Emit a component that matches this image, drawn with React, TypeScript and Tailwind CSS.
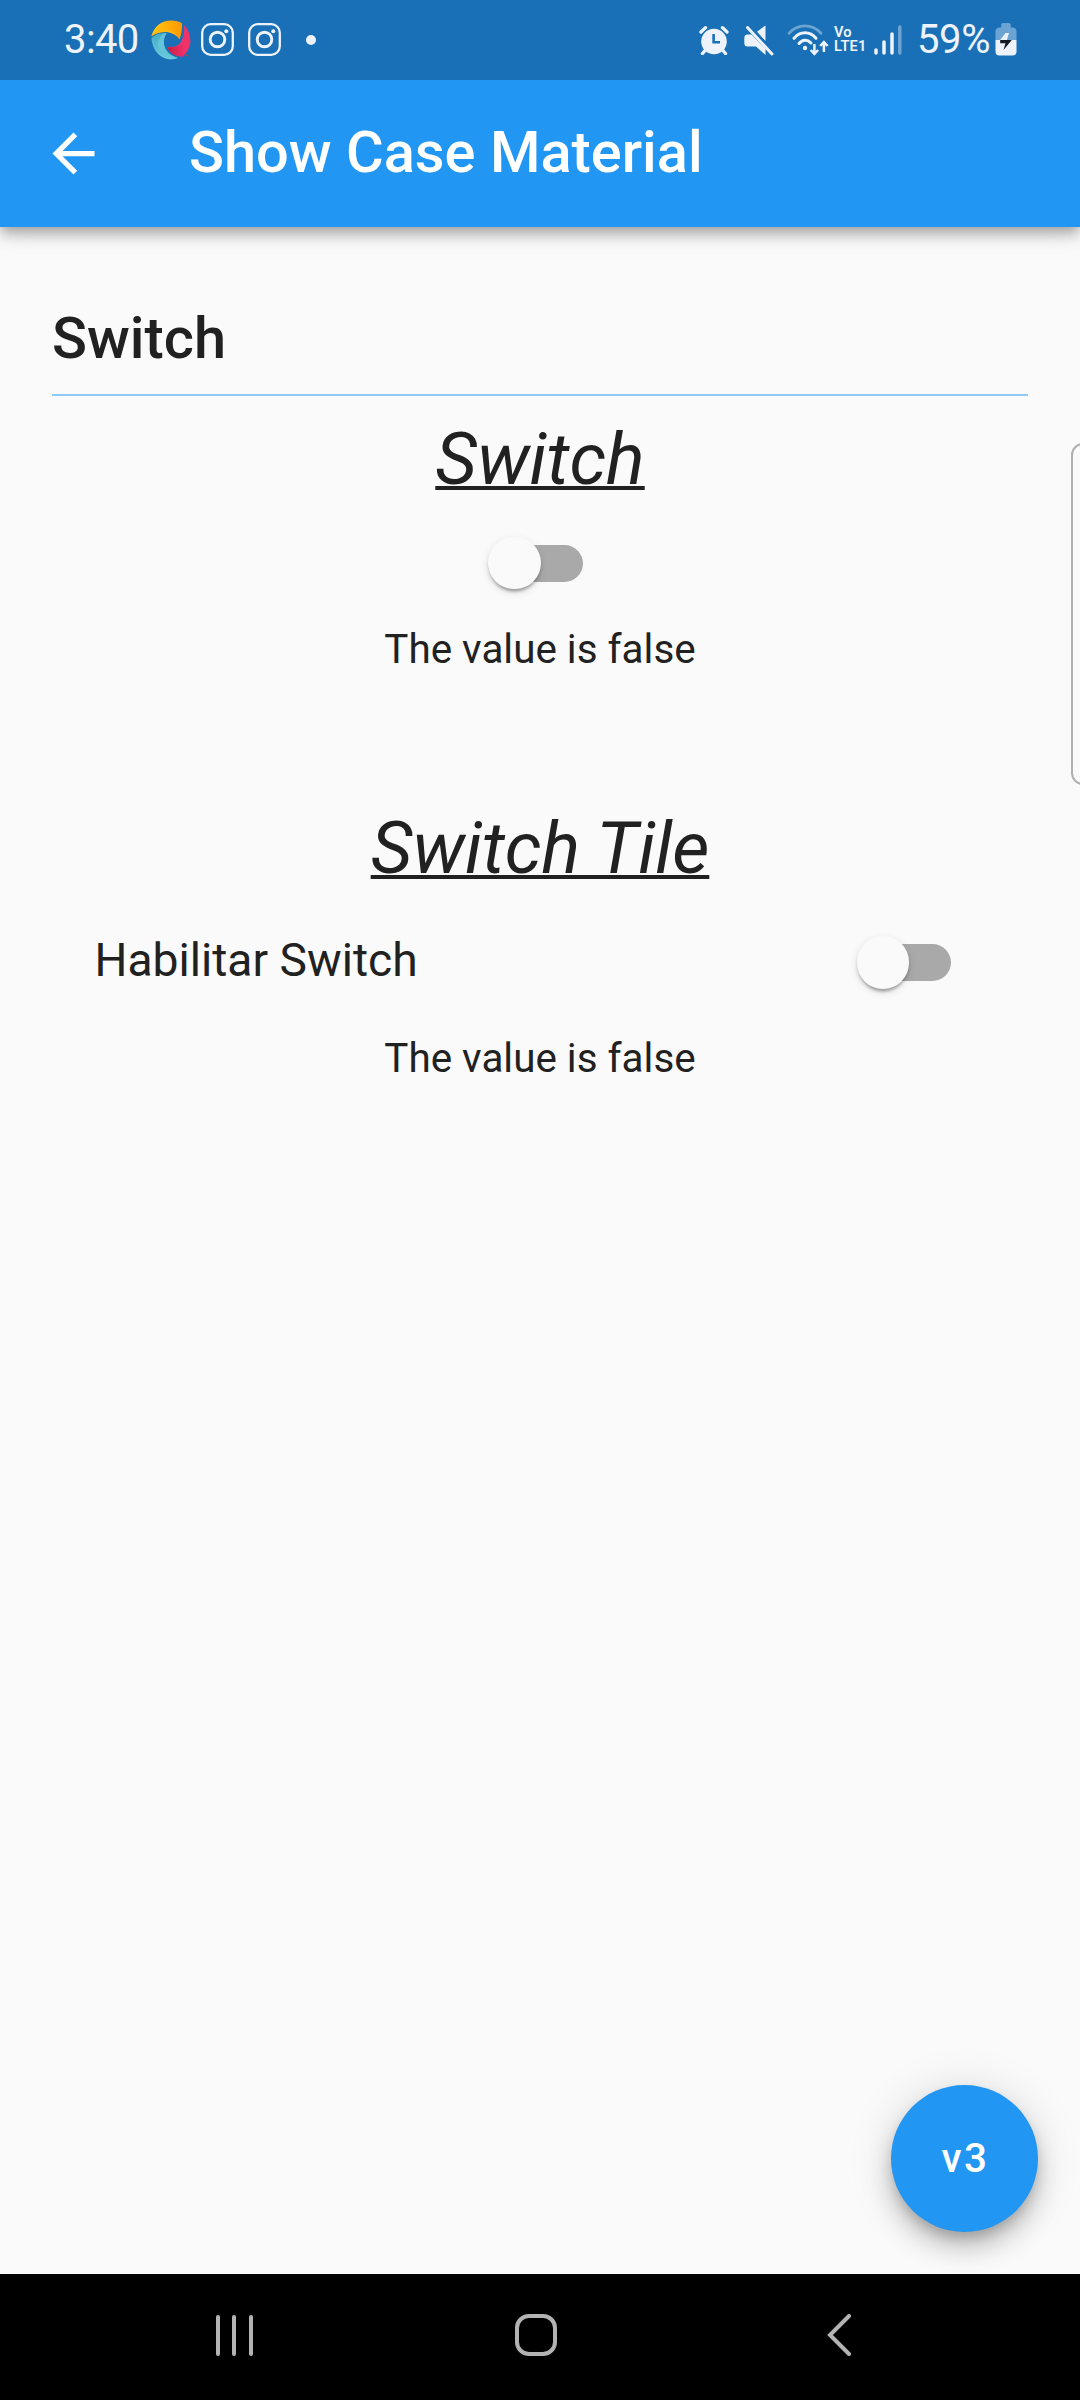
import React from "react";

const FG = "#eef3fb";

function PinwheelIcon() {
  return (
    <svg className="ml-[14px] h-[40px] w-[40px]" viewBox="0 0 40 40">
      <defs>
        <linearGradient id="amber" x1="0" x2="1">
          <stop offset="0" stopColor="#ffc814" />
          <stop offset="1" stopColor="#ff9800" />
        </linearGradient>
        <linearGradient id="rose" x1="0" x2="1">
          <stop offset="0" stopColor="#c81e40" />
          <stop offset="1" stopColor="#f0306a" />
        </linearGradient>
        <linearGradient id="aqua" x1="0" y1="0" x2="0" y2="1">
          <stop offset="0" stopColor="#45abc0" />
          <stop offset="1" stopColor="#6ccbe0" />
        </linearGradient>
      </defs>
      <path d="M0.4 16.200C3 6 11 0.400 20 0.400C24 0.400 28 1.400 31 3.200Q31.500 11 28.500 19.500C26 15 21 12.500 16 12C10 11.500 4 13.500 0.400 16.200Z" fill="url(#amber)" />
      <path d="M0.4 16.200C7 7 20 5 28.500 19.500C26 15 21 12.500 16 12C10 11.500 4 13.500 0.400 16.200Z" fill="#ffb812" />
      <path d="M33 5C38 10 40.500 18 39 25C37.500 30 35 34 31.500 36.500C25 37 18.500 33 16.300 27C22 27.500 27 26.500 30 22C33 17 33.500 11 33 5Z" fill="#f0326b" />
      <path d="M16.300 27C22 27.500 27 26.500 33 24C33 29 33 33 31.500 36.500C25 37 18.500 33 16.300 27Z" fill="url(#rose)" />
      <path d="M33.500 35.500L36.500 34.300L37.500 36.400Z" fill="#dc2950" />
      <path d="M0.4 18C4 14.500 9 13 15.800 12.800C12 18 12 25 15 30C18 34.500 22 36.500 27 38C14 43 1.500 34 0.400 18Z" fill="url(#aqua)" />
      <path d="M6.500 24C8 17 11 14 15.800 12.800C12 18 12 25 15 30C18 34.500 22 36.500 27 38C16 38 8 32 6.500 24Z" fill="#62c4d8" />
    </svg>
  );
}

function CameraIcon({ className }: { className: string }) {
  return (
    <svg className={className} viewBox="0 0 33 33" fill="none" stroke={FG}>
      <rect x="1.2" y="1.200" width="30.600" height="30.600" rx="8.500" strokeWidth="2.300" />
      <circle cx="16.500" cy="16.500" r="7.300" strokeWidth="2.900" />
      <circle cx="25.300" cy="8.200" r="2" fill={FG} stroke="none" />
    </svg>
  );
}

function AlarmIcon() {
  return (
    <svg className="h-[30px] w-[30px]" viewBox="0 0 30 30">
      <path d="M2 7L6.500 2.700M28 7L23.500 2.700" stroke={FG} strokeWidth="3.400" strokeLinecap="round" />
      <circle cx="15" cy="16.500" r="14" fill="#1970b6" />
      <path d="M6.500 25L3.500 28.500M23.500 25L26.500 28.500" stroke={FG} strokeWidth="3.400" strokeLinecap="round" />
      <circle cx="15" cy="16.500" r="12.800" fill={FG} />
      <path d="M14.600 9V17.300H21" stroke="#1970b6" strokeWidth="2.600" fill="none" />
    </svg>
  );
}

function MuteIcon() {
  return (
    <svg className="ml-[15px] h-[32px] w-[30px]" viewBox="0 0 30 32">
      <path d="M21.500 1.500V17L13 7.800Z" fill={FG} />
      <path d="M3.500 10.500H7.500L21.500 25V31L12 22.500H3.500Q0.300 22.500 0.300 19V14Q0.300 10.500 3.500 10.500Z" fill={FG} />
      <path d="M5.500 1.500L30 28" stroke="#1970b6" strokeWidth="1.600" />
      <path d="M3.500 3.500L28 30" stroke={FG} strokeWidth="3" strokeLinecap="round" />
    </svg>
  );
}

function WifiIcon() {
  return (
    <svg className="ml-[13px] h-[34px] w-[42px]" viewBox="0 0 42 34" fill="none" stroke={FG} strokeLinecap="round">
      <path d="M2 10.200C11 0.500 25 0.500 34 10.200" strokeWidth="2.800" opacity="0.400" />
      <path d="M7 15.300C13 7.800 23 7.800 29 15.300" strokeWidth="3" />
      <path d="M12 20.500C15.500 16.300 20.500 16.300 24 20" strokeWidth="3" />
      <circle cx="18" cy="25" r="2.200" fill={FG} stroke="none" />
      <path d="M27.400 21V30M23.700 27L27.400 31L31.100 27M36.900 29V20M33.200 23L36.900 19L40.600 23" strokeWidth="2.500" strokeLinecap="butt" />
    </svg>
  );
}

function SignalIcon() {
  return (
    <svg className="ml-[9px] h-[30px] w-[28px]" viewBox="0 0 28 30" stroke={FG} strokeWidth="3.500" strokeLinecap="round">
      <path d="M2 25V28M10 17V28M18 9V28" />
      <path d="M25.800 2V28" opacity="0.400" />
    </svg>
  );
}

function BatteryIcon() {
  return (
    <svg className="ml-[6px] h-[33px] w-[22px]" viewBox="0 0 22 33">
      <path d="M6.200 4.600V2Q6.200 0 8 0H14Q15.800 0 15.800 2V4.600H18Q21.500 5 21.500 8.500V17H0.500V8.500Q0.500 5 4 4.600Z" fill="#6ba3d3" />
      <path d="M0.500 17H21.500V28.500Q21.500 32.500 17.500 32.500H4.500Q0.500 32.500 0.500 28.500Z" fill={FG} />
      <path d="M10.500 10H14L11.800 17H5.200Z" fill={FG} />
      <path d="M5.200 17H16.800L8.500 27L10.500 20.300H5.200Z" fill="#111820" />
    </svg>
  );
}

function Switch() {
  return (
    <div className="flex h-[126px] w-[94.5px] items-center">
      <div className="ml-[7.200px] flex h-[37px] w-[86.600px] items-center rounded-full bg-[#a9a9a9]">
        <div className="-ml-[8px] h-[52.500px] w-[52.500px] shrink-0 rounded-full bg-[#fafafa] shadow-[0_5px_3px_-3px_rgba(0,0,0,0.2),0_3px_3px_0_rgba(0,0,0,0.14),0_3px_8px_0_rgba(0,0,0,0.12)]" />
      </div>
    </div>
  );
}

function Headline({ children }: { children: React.ReactNode }) {
  return (
    <h2 className="h-[84px] pt-px text-center text-[72.200px] leading-[84px] font-normal italic underline decoration-[3.700px] underline-offset-[1.500px] [text-decoration-skip-ink:none]">
      {children}
    </h2>
  );
}

function ValueText() {
  return <p className="h-[47px] text-center text-[40.400px] leading-[47px]">The value is false</p>;
}

export default function App() {
  return (
    <div className="relative flex h-[2400px] w-[1080px] flex-col overflow-hidden bg-[#fafafa] font-[Roboto,sans-serif] text-[#212121]">
      <div className="z-20 flex h-[80px] shrink-0 items-center justify-between bg-[#1970b6] pr-[63px] pb-px pl-[64px] text-[#eef3fb]">
        <div className="flex items-center">
          <span className="w-[73px] text-[40px] leading-[47px] tracking-[-0.600px] whitespace-nowrap">3:40</span>
          <PinwheelIcon />
          <CameraIcon className="ml-[10px] h-[33px] w-[33px]" />
          <CameraIcon className="ml-[14px] h-[33px] w-[33px]" />
          <span className="ml-[25px] h-[10px] w-[10px] rounded-full bg-[#eef3fb]" />
        </div>
        <div className="flex items-center">
          <AlarmIcon />
          <MuteIcon />
          <WifiIcon />
          <div className="ml-[5px] flex w-[31px] flex-col text-[14.600px] leading-[13.500px] font-semibold tracking-[0.200px]">
            <span>Vo</span>
            <span>LTE1</span>
          </div>
          <SignalIcon />
          <span className="ml-[15px] w-[72px] text-[40px] leading-[47px] tracking-[-0.400px] whitespace-nowrap">59%</span>
          <BatteryIcon />
        </div>
      </div>

      <header className="z-10 flex h-[147px] shrink-0 items-center bg-[#2196f3] text-white shadow-[0_5px_10px_-2px_rgba(0,0,0,0.2),0_10px_13px_0_rgba(0,0,0,0.14),0_2px_26px_0_rgba(0,0,0,0.12)]">
        <svg className="ml-[42px] h-[63px] w-[63px]" viewBox="0 0 24 24" fill="currentColor">
          <path d="M20 11H7.830l5.590-5.590L12 4l-8 8 8 8 1.410-1.410L7.830 13H20v-2z" />
        </svg>
        <h1 className="ml-[84px] pb-[3px] text-[57.750px] leading-[68px] font-medium">Show Case Material</h1>
      </header>

      <main className="flex grow flex-col px-[52px] pt-[77px]">
        <h2 className="h-[68px] text-[57.750px] leading-[68px] font-medium">Switch</h2>
        <div className="mt-[22px] h-[2px] bg-[#90caf9]" />
        <section className="mt-[21px] flex flex-col">
          <Headline>Switch</Headline>
          <div className="-mt-px flex justify-center pr-[7px]">
            <Switch />
          </div>
          <ValueText />
        </section>
        <section className="mt-[133px] flex flex-col">
          <Headline>Switch Tile</Headline>
          <div className="flex h-[145px] items-center justify-between pr-[76px] pl-[42.500px]">
            <span className="pb-[6px] text-[46.200px] leading-[54px]">Habilitar Switch</span>
            <Switch />
          </div>
          <ValueText />
        </section>
      </main>

      <nav className="z-10 grid h-[126px] shrink-0 grid-cols-[303px_303px_303px] justify-center bg-black pr-[8px] pb-[4px]">
        <div className="flex items-center justify-center gap-[12.500px] pl-[2px]">
          <span className="h-[41px] w-[4px] rounded-full bg-[#b3b3b3]" />
          <span className="h-[41px] w-[4px] rounded-full bg-[#b3b3b3]" />
          <span className="h-[41px] w-[4px] rounded-full bg-[#b3b3b3]" />
        </div>
        <div className="flex items-center justify-center">
          <span className="h-[42px] w-[42px] rounded-[14px] border-4 border-[#b3b3b3]" />
        </div>
        <div className="flex items-center justify-center">
          <svg className="h-[42px] w-[24px]" viewBox="0 0 24 42" fill="none" stroke="#b3b3b3" strokeWidth="4" strokeLinecap="round">
            <path d="M22 2L3 21L22 40" />
          </svg>
        </div>
      </nav>

      <div className="absolute top-[443px] right-[-20px] h-[342px] w-[29px] rounded-[12px] border-2 border-[#b0b0b0]" />
      <button className="absolute top-[2085px] left-[891px] flex h-[147px] w-[147px] items-center justify-center rounded-full bg-[#2196f3] pt-[2px] pl-[2px] text-[40.400px] font-medium tracking-[2.600px] text-white shadow-[0_8px_13px_-3px_rgba(0,0,0,0.2),0_16px_26px_0_rgba(0,0,0,0.18),0_3px_47px_0_rgba(0,0,0,0.12)]">
        v3
      </button>
    </div>
  );
}
